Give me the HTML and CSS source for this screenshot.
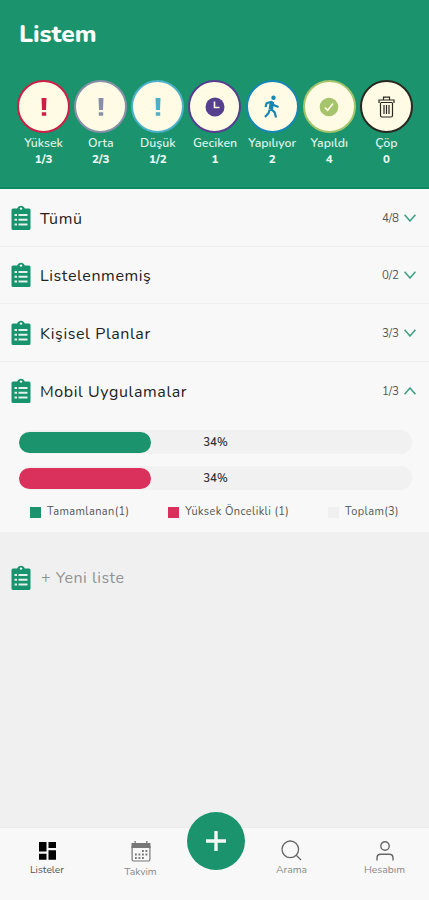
FILE: index.html
```html
<!DOCTYPE html>
<html lang="tr">
<head>
  <meta charset="UTF-8" />
  <meta name="viewport" content="width=device-width, initial-scale=1.0"/>
  <title>Listem</title>
  <link rel="stylesheet" href="styles.css">
</head>
<body>

  <!-- Shared icons -->
  <svg class="sprite">
    <symbol id="mark" viewBox="0 0 8 20">
      <path d="M1.5 1h5l-.5 12H2zM1.8 15.2h4.4v3.6H1.8z"/>
    </symbol>
    <symbol id="clipboard" viewBox="0 0 20 26">
      <path fill="#17946d" d="M2 3.5h4.2C7 1.8 8.2.8 10 .8s3 1 3.8 2.7H18A1.5 1.5 0 0 1 19.500 5v18.500A1.500 1.500 0 0 1 18 25H2A1.500 1.500 0 0 1 .5 23.500V5A1.500 1.500 0 0 1 2 3.500z"/>
      <circle cx="10" cy="3.600" r="1.200" fill="#f7f7f7"/>
      <path stroke="#e4f1ec" stroke-width="2" d="M3.500 10H6M7.500 10H16.500M3.500 14.800H6M7.500 14.800H16.500M3.500 19.600H6M7.500 19.600H16.500"/>
    </symbol>
    <symbol id="chevron" viewBox="0 0 12 8">
      <path fill="none" stroke="#3a9f80" stroke-width="1.500" d="M.6.8 6 7 11.400.8"/>
    </symbol>
  </svg>

  <header>
    <h1>Listem</h1>
    <div class="stats">
      <div class="stat high">
        <div class="circle"><svg class="mark"><use href="#mark"/></svg></div>
        <span>Yüksek</span>
        <b>1/3</b>
      </div>
      <div class="stat medium">
        <div class="circle"><svg class="mark"><use href="#mark"/></svg></div>
        <span>Orta</span>
        <b>2/3</b>
      </div>
      <div class="stat low">
        <div class="circle"><svg class="mark"><use href="#mark"/></svg></div>
        <span>Düşük</span>
        <b>1/2</b>
      </div>
      <div class="stat late">
        <div class="circle">
          <svg width="20" height="20" viewBox="0 0 20 20">
            <circle cx="10" cy="10" r="9.500"/>
            <path fill="none" stroke="#fffbe4" stroke-width="1.600" d="M9.500 4.500v6h5"/>
          </svg>
        </div>
        <span>Geciken</span>
        <b>1</b>
      </div>
      <div class="stat doing">
        <div class="circle">
          <svg width="18" height="24" viewBox="0 0 18 24">
            <circle cx="10.500" cy="2.700" r="2.200"/>
            <path fill="none" stroke="currentColor" stroke-width="2.200" stroke-linejoin="round" d="M2.500 12 3.600 8.200 8.500 6.800l2.500 3.400 4.500 1.800M6.700 14.500 5.600 18l-3.600 4M8 14l3.700 3.400 1.300 5.200"/>
            <path d="M6.800 6.200 11 7l-.8 7-1 1-3.500-1z"/>
          </svg>
        </div>
        <span>Yapılıyor</span>
        <b>2</b>
      </div>
      <div class="stat done">
        <div class="circle">
          <svg width="20" height="20" viewBox="0 0 20 20">
            <circle cx="10" cy="10" r="9.300"/>
            <path fill="none" stroke="#fffbe4" stroke-width="1.600" d="M5.800 10.500 8.700 13.300 14 6.500"/>
          </svg>
        </div>
        <span>Yapıldı</span>
        <b>4</b>
      </div>
      <div class="stat trash">
        <div class="circle">
          <svg width="17" height="22" viewBox="0 0 17 22" fill="none" stroke="currentColor" stroke-width="1.200">
            <path d="M5.500 3.500V1.200h6v2.300M1 7V4h15v3M2.500 7v12.500q0 1.500 1.500 1.500h9q1.500 0 1.500-1.500V7M2.500 6.500h12M6 9v9M8.500 9v9M11 9v9"/>
          </svg>
        </div>
        <span>Çöp</span>
        <b>0</b>
      </div>
    </div>
  </header>

  <main>
    <section class="lists">
      <div class="row">
        <svg class="clip"><use href="#clipboard"/></svg>
        <h2>Tümü</h2>
        <span class="count">4/8</span>
        <svg class="chevron"><use href="#chevron"/></svg>
      </div>
      <div class="row">
        <svg class="clip"><use href="#clipboard"/></svg>
        <h2>Listelenmemiş</h2>
        <span class="count">0/2</span>
        <svg class="chevron"><use href="#chevron"/></svg>
      </div>
      <div class="row">
        <svg class="clip"><use href="#clipboard"/></svg>
        <h2>Kişisel Planlar</h2>
        <span class="count">3/3</span>
        <svg class="chevron"><use href="#chevron"/></svg>
      </div>
      <div class="row open">
        <svg class="clip"><use href="#clipboard"/></svg>
        <h2>Mobil Uygulamalar</h2>
        <span class="count">1/3</span>
        <svg class="chevron up"><use href="#chevron"/></svg>
      </div>
      <div class="progress">
        <div class="track">
          <div class="bar green" style="width: 33.6%"></div>
          <span>34%</span>
        </div>
        <div class="track">
          <div class="bar red" style="width: 33.6%"></div>
          <span>34%</span>
        </div>
        <div class="legend">
          <div><i class="green"></i>Tamamlanan(1)</div>
          <div><i class="red"></i>Yüksek Öncelikli (1)</div>
          <div><i class="grey"></i>Toplam(3)</div>
        </div>
      </div>
    </section>

    <div class="new-list">
      <svg class="clip"><use href="#clipboard"/></svg>
      <span>+ Yeni liste</span>
    </div>
  </main>

  <nav>
    <a class="active">
      <svg width="17" height="18" viewBox="0 0 17 18"><path fill="#000" d="M0 0h7.500v9.500H0zM9.500 0H17v6H9.500zM0 11.800h7.500v6H0zM9.500 8.200H17v9.600H9.500z"/></svg>
      Listeler
    </a>
    <a class="calendar">
      <svg width="20" height="21" viewBox="0 0 20 21">
        <path fill="#777" d="M.5 2h3V0h1.300v2h10.400V0h1.300v2h3v5H.5z"/>
        <path fill="none" stroke="#777" stroke-width="1.200" d="M1.100 5v13.500q0 1.500 1.500 1.500h14.800q1.500 0 1.500-1.500V5"/>
        <path stroke="#777" stroke-width="1.800" stroke-dasharray="1.800 1.700" d="M11 10h6M4 13.500h13M4 17h9"/>
      </svg>
      Takvim
    </a>
    <button class="add">
      <svg width="20" height="20" viewBox="0 0 20 20"><path stroke="#f3f8f5" stroke-width="3.400" d="M10 0v20M0 10h20"/></svg>
    </button>
    <a class="search">
      <svg width="21" height="21" viewBox="0 0 21 21"><g fill="none" stroke="#666" stroke-width="1.300"><circle cx="9.300" cy="9.300" r="8.300"/><path d="m15 15 5 5"/></g></svg>
      Arama
    </a>
    <a class="account">
      <svg width="18" height="20" viewBox="0 0 18 20"><g fill="none" stroke="#666" stroke-width="1.400"><circle cx="9" cy="5" r="4.200"/><path d="M1 19.500V17q0-3.700 3.700-3.700h8.600q3.700 0 3.700 3.700v2.500"/></g></svg>
      Hesabım
    </a>
  </nav>

</body>
</html>
```
FILE: styles.css
```css
* { box-sizing: border-box; }
body { font-family: Nunito, "Open Sans", "Noto Sans", sans-serif; margin: 0; min-height: 900px; background: #f0f0f0; display: flex; flex-direction: column; }
h1, h2 { margin: 0; }
.sprite { display: none; }

/* Header */
header { height: 189px; padding: 17px 14px 0 15px; background: #1b946d; border-bottom: 2px solid #0b8a60; color: #fff; }
h1 { font-size: 24.500px; line-height: 34px; font-weight: 800; padding-left: 4px; }
.stats { display: grid; grid-template-columns: repeat(7, 1fr); margin-top: 29px; }
.stat { display: flex; flex-direction: column; align-items: center; font-size: 12.300px; line-height: 16px; color: #dff0e7; white-space: nowrap; }
.stat span { margin-top: 2px; font-weight: 600; }
.stat b { font-size: 11.500px; font-weight: 800; color: #e9f6ef; }
.circle { width: 53px; height: 53px; border: 2px solid currentColor; border-radius: 50%; background: #fffbe4; display: flex; align-items: center; justify-content: center; }
.circle svg { fill: currentColor; }
.circle .mark { width: 8px; height: 20px; }
.trash .circle svg { fill: none; }
.high .circle { color: #cc1f47; }
.medium .circle { color: #8790a8; }
.low .circle { color: #4bb0c8; }
.late .circle { color: #553f8e; }
.doing .circle { color: #1686b2; }
.done .circle { color: #a6c46c; }
.trash .circle { color: #292921; }

/* Lists */
main { flex: 1; }
.lists { background: #f8f8f8; height: 343px; }
.row { height: 57.600px; display: flex; align-items: center; padding: 1px 13px 0 11px; border-bottom: 1px solid #eee; }
.row.open { border: 0; }
.clip { width: 20px; height: 26px; flex: none; }
.row h2 { flex: 1; margin-left: 9px; padding-top: 2px; font-size: 16px; letter-spacing: .6px; font-weight: 400; color: #222; }
.row.open h2 { padding-top: 1px; }
.count { font-size: 11.500px; color: #555; margin-right: 5px; }
.chevron { width: 12px; height: 8px; }
.chevron.up { transform: scaleY(-1); }

/* Progress bars */
.progress { padding: 11px 17px 0 19px; }
.track { height: 24px; margin-bottom: 12px; border-radius: 12px; background: #f1f1f1; display: grid; align-items: center; }
.track > * { grid-area: 1 / 1; }
.track span { text-align: center; font-size: 11.500px; font-weight: 600; color: #333; }
.bar { height: 21px; border-radius: 11px; }
.green { background: #1b946d; }
.red { background: #d9315b; }
.grey { background: #f0f0f0; }
.legend { display: flex; justify-content: space-between; padding: 0 13px 0 11px; font-size: 11px; letter-spacing: .4px; line-height: 20px; color: #555; }
.legend div { display: flex; align-items: center; white-space: nowrap; }
.legend i { width: 11px; height: 11px; margin-right: 6px; }

.new-list { display: flex; align-items: center; padding: 33px 11px 0; }
.new-list span { margin-left: 10px; font-size: 16px; letter-spacing: .5px; line-height: 26px; color: #929292; }

/* Bottom bar */
nav { height: 73px; background: #f8f8f8; border-top: 1px solid #ebebeb; display: grid; grid-template-columns: 94px 93px 58px 93px 91px; }
nav a { display: flex; flex-direction: column; align-items: center; padding-top: 14px; gap: 3px; font-size: 10.300px; line-height: 14px; color: #888; }
nav .calendar { padding-top: 13px; }
nav .active { color: #555; }
nav .search { padding-top: 12px; gap: 2px; }
nav .account { padding: 13px 0 0 2px; gap: 2px; }
.add { width: 58px; height: 58px; margin-top: -16px; padding: 0; border: 0; border-radius: 50%; background: #1b946d; display: flex; align-items: center; justify-content: center; }
```
